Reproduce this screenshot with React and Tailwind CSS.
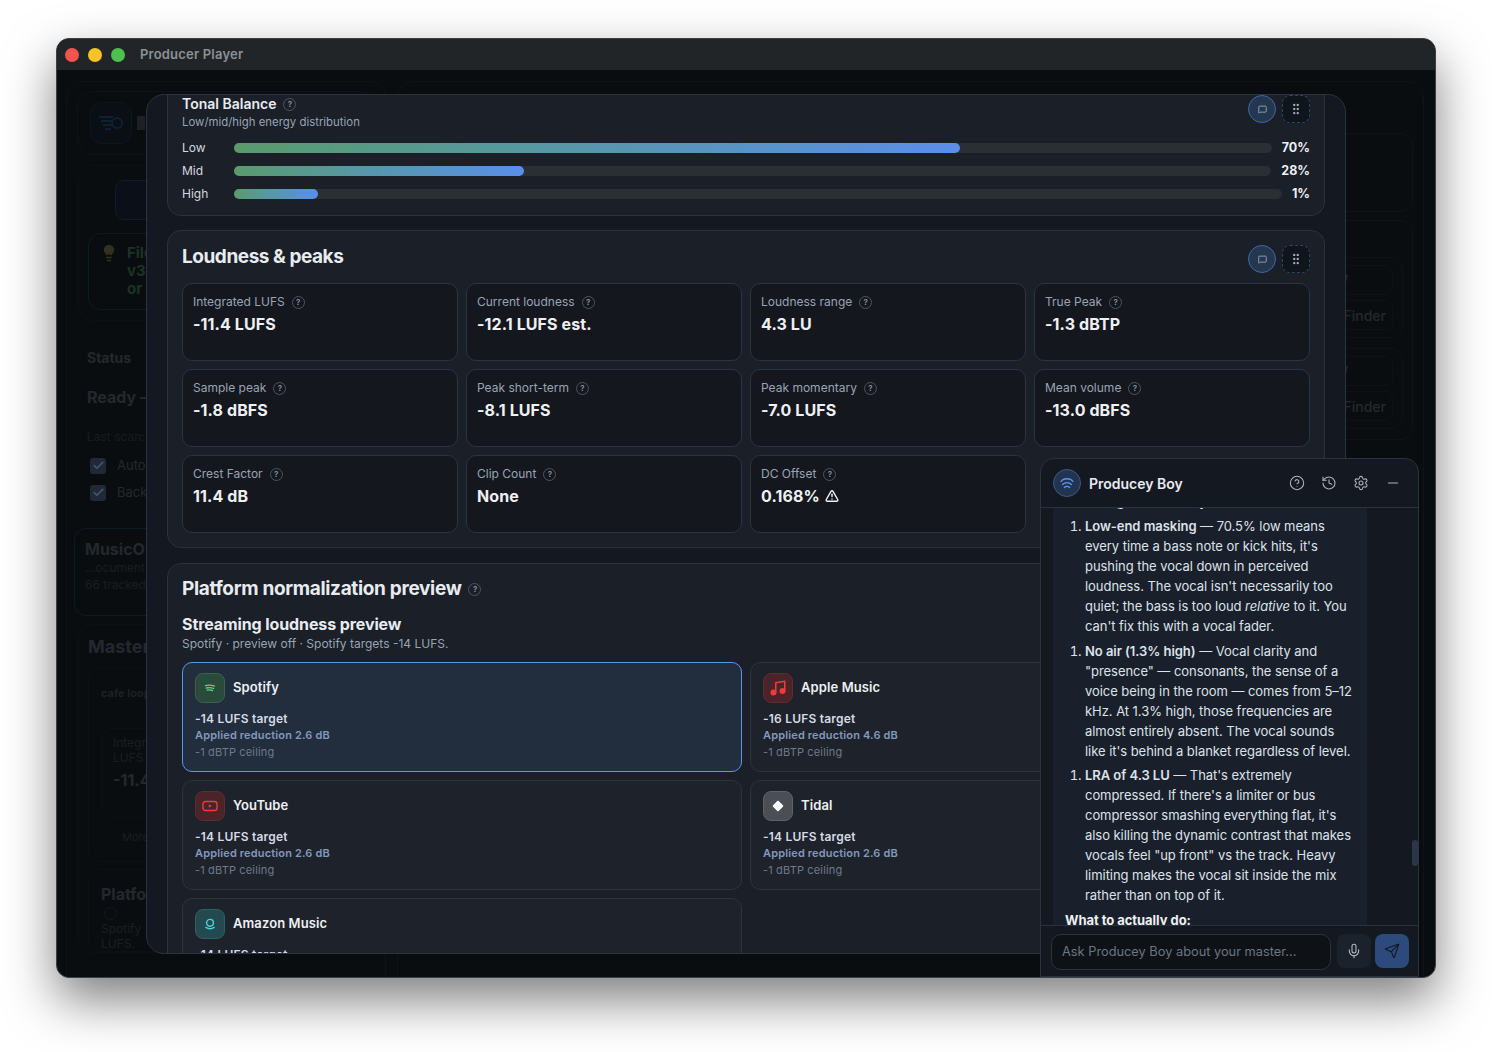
import { CircleHelp, History, Settings, Minus, Mic, Send, TriangleAlert, MessageSquare, GripVertical, Lightbulb, Check } from 'lucide-react';

const tonal = [
  { label: 'Low', value: '70%', fill: 'w-[70%]' },
  { label: 'Mid', value: '28%', fill: 'w-[28%]' },
  { label: 'High', value: '1%', fill: 'w-[8%]' },
];

const stats = [
  { label: 'Integrated LUFS', value: '-11.4 LUFS' },
  { label: 'Current loudness', value: '-12.1 LUFS est.' },
  { label: 'Loudness range', value: '4.3 LU' },
  { label: 'True Peak', value: '-1.3 dBTP' },
  { label: 'Sample peak', value: '-1.8 dBFS' },
  { label: 'Peak short-term', value: '-8.1 LUFS' },
  { label: 'Peak momentary', value: '-7.0 LUFS' },
  { label: 'Mean volume', value: '-13.0 dBFS' },
  { label: 'Crest Factor', value: '11.4 dB' },
  { label: 'Clip Count', value: 'None' },
  { label: 'DC Offset', value: '0.168%', warn: true },
];

function SpotifyIcon() {
  return (
    <svg width="14" height="14" viewBox="0 0 14 14" fill="none" stroke="#4ade80" strokeWidth="1.3" strokeLinecap="round">
      <path d="M2.5 4.6c3-.8 6-.6 9 .5" />
      <path d="M3.3 7c2.5-.6 5-.4 7.3.5" />
      <path d="M4.2 9.2c1.9-.4 3.7-.3 5.4.4" />
    </svg>
  );
}

function YoutubeIcon() {
  return (
    <svg width="16" height="12" viewBox="0 0 16 12" fill="none">
      <rect x="1" y="1.5" width="14" height="9" rx="2.6" stroke="#ef3b3b" strokeWidth="1.4" />
      <path d="M6.8 4.2 9.8 6l-3 1.8z" fill="#ef3b3b" />
    </svg>
  );
}

function AppleIcon() {
  return (
    <svg width="18" height="18" viewBox="0 0 24 24" fill="#ef3b3b" stroke="#ef3b3b" strokeWidth="2" strokeLinecap="round" strokeLinejoin="round">
      <path d="M9 18V5l12-2v13" fill="none" />
      <circle cx="6" cy="18" r="3" />
      <circle cx="18" cy="16" r="3" />
    </svg>
  );
}

function AmazonIcon() {
  return (
    <svg width="14" height="14" viewBox="0 0 14 14" fill="none" stroke="#4fd1d9" strokeWidth="1.4" strokeLinecap="round">
      <circle cx="7" cy="5.8" r="3.4" />
      <path d="M2.8 10.4c2.6 1.6 5.8 1.6 8.4 0" />
    </svg>
  );
}

const platforms = [
  {
    name: 'Spotify', target: '-14 LUFS target', reduction: 'Applied reduction 2.6 dB', active: true,
    tile: 'bg-[#2a4a3c] border-[#386349]', icon: <SpotifyIcon />,
  },
  {
    name: 'Apple Music', target: '-16 LUFS target', reduction: 'Applied reduction 4.6 dB',
    tile: 'bg-[#4a2429] border-[#5e2c32]', icon: <AppleIcon />,
  },
  {
    name: 'YouTube', target: '-14 LUFS target', reduction: 'Applied reduction 2.6 dB',
    tile: 'bg-[#4a2429] border-[#5e2c32]', icon: <YoutubeIcon />,
  },
  {
    name: 'Tidal', target: '-14 LUFS target', reduction: 'Applied reduction 2.6 dB',
    tile: 'bg-[#4b4e54] border-[#5f6268]', icon: <span className="block h-[8px] w-[8px] rotate-45 rounded-[1px] bg-white" />,
  },
  {
    name: 'Amazon Music', target: '-14 LUFS target', reduction: 'Applied reduction 2.6 dB',
    tile: 'bg-[#234a50] border-[#2e5f66]', icon: <AmazonIcon />,
  },
];

function Hint() {
  return (
    <span className="ml-[7px] flex h-[13px] w-[13px] shrink-0 items-center justify-center rounded-full border border-[#4b5563] text-[8px] font-semibold leading-none text-[#8b95a5]">
      ?
    </span>
  );
}

function CardActions() {
  return (
    <div className="flex gap-[6px]">
      <button className="flex h-[28px] w-[28px] items-center justify-center rounded-full border border-[#3b6ba8] bg-[#25364f]">
        <MessageSquare size={9} color="#aebccf" strokeWidth={2} />
      </button>
      <button className="flex h-[28px] w-[28px] items-center justify-center rounded-[8px] border border-dashed border-[#2f4568] bg-[#10141b]">
        <GripVertical size={14} color="#9fb0c8" strokeWidth={2} />
      </button>
    </div>
  );
}

function Backdrop() {
  return (
    <div className="flex h-[909px] gap-[11px] overflow-hidden pl-[9px] pr-[11px] pt-[11px] text-[#24282d]">
      <div className="w-[320px] shrink-0 rounded-t-2xl border border-[#0f1317] px-[10px] pt-[9px]">
        <div className="flex h-[64px] items-center rounded-2xl border border-[#0d131b] pl-[12px]">
          <div className="flex h-[42px] w-[42px] items-center justify-center rounded-xl border border-[#0f1620] bg-[#0a0f16]">
            <svg width="26" height="18" viewBox="0 0 26 18" fill="none" stroke="#121f33" strokeWidth="2">
              <path d="M1 3h14M3 7h11M5 11h9M7 15h6" />
              <circle cx="19" cy="9" r="5" />
            </svg>
          </div>
          <div className="ml-[5px] h-[14px] w-[8px] bg-[#1d2024]" />
        </div>
        <div className="mt-[10px] h-[156px] rounded-2xl border border-[#0d1115] pt-[14px]">
          <div className="ml-[37px] h-[40px] w-[220px] rounded-lg border border-[#111c2c] bg-[#0b1018]" />
          <div className="ml-[10px] mt-[13px] flex h-[77px] gap-[9px] rounded-xl border border-[#0f1c17] pl-[11px] pt-[10px]">
            <Lightbulb size={18} color="#33301f" fill="#33301f" />
            <p className="text-[15px] font-bold leading-[18px] text-[#1c3326]">Files<br />v3<br />or</p>
          </div>
        </div>
        <div className="mt-[16px] pl-[10px]">
          <p className="pt-[10px] text-[14px] font-bold text-[#24282d]">Status</p>
          <p className="mt-[17px] text-[16px] font-bold text-[#24282d]">Ready —</p>
          <p className="mt-[19px] text-[12px] text-[#171b20]">Last scan:</p>
          <div className="mt-[6px] flex h-[27px] items-center gap-[11px] pl-[3px] text-[13px]">
            <span className="flex h-[16px] w-[16px] items-center justify-center rounded-[3px] bg-[#1f2937]"><Check size={13} color="#50565e" strokeWidth={3} /></span>
            Auto
          </div>
          <div className="flex h-[27px] items-center gap-[11px] pl-[3px] text-[13px]">
            <span className="flex h-[16px] w-[16px] items-center justify-center rounded-[3px] bg-[#1f2937]"><Check size={13} color="#50565e" strokeWidth={3} /></span>
            Back
          </div>
        </div>
        <div className="-ml-[3px] mt-[22px] h-[88px] rounded-xl border border-[#0f1a29] pl-[10px] pt-[10px]">
          <p className="text-[16px] font-bold leading-[20px] text-[#24282d]">MusicOut</p>
          <p className="text-[12px] leading-[17px] text-[#191d22]">...ocuments</p>
          <p className="text-[12px] leading-[17px] text-[#191d22]">66 tracked</p>
        </div>
        <div className="mt-[8px] rounded-2xl border border-[#0d1115] pl-[10px] pt-[10px]">
          <p className="text-[18px] font-bold leading-[24px] text-[#24282d]">Mastering</p>
          <div className="mt-[8px] rounded-xl border border-[#0d1115] pl-[12px] pt-[17px]">
            <p className="text-[11px] font-bold text-[#1d2024]">cafe loop</p>
            <div className="mt-[26px] h-[90px] rounded-xl border border-[#0d1115] pl-[11px] pt-[6px] text-[12px] leading-[15px] text-[#1a1e22]">
              Integrated<br />LUFS
              <p className="mt-[8px] text-[16px] font-bold text-[#24282d]">-11.4</p>
            </div>
            <p className="pb-[16px] pl-[21px] pt-[11px] text-[11px] text-[#191d22]">More</p>
          </div>
          <div className="mt-[7px] rounded-xl border border-[#0d1115] pl-[12px] pt-[14px]">
            <p className="text-[16px] font-bold leading-[20px] text-[#24282d]">Platform</p>
            <span className="ml-[3px] mt-[3px] block h-[13px] w-[13px] rounded-full border border-[#15191e]" />
            <p className="mt-[1px] text-[12px] leading-[15px] text-[#1a1e22]">Spotify ·<br />LUFS.</p>
          </div>
        </div>
      </div>
      <div className="flex-1 rounded-t-2xl border border-[#0f1317] pl-[10px] pr-[10px] pt-[51px]">
        <div className="h-[79px] rounded-xl border border-[#0f1317]" />
        <div className="mt-[8px] rounded-xl border border-[#0f1317] pl-[10px] pr-[9px] pt-[36px]">
          {[0, 1].map((n) => (
            <div key={n} className="mb-[10px] rounded-xl border border-[#0e1216] px-[9px] pb-[7px] pt-[7px]">
              <div className="flex h-[30px] items-center justify-end rounded-lg border border-[#0e1216] pr-[44px] text-[14px] font-medium text-[#24282d]">Open in DAW</div>
              <div className="mt-[5px] flex h-[30px] items-center justify-end rounded-lg border border-[#0e1216] pr-[6px] text-[14px] font-medium text-[#24282d]">Reveal in Finder</div>
            </div>
          ))}
        </div>
      </div>
    </div>
  );
}

function AnalysisModal() {
  return (
    <div className="absolute left-[89px] top-[55px] h-[860px] w-[1200px] overflow-hidden rounded-[18px] border border-[#2a3342] bg-[#141820] px-[20px] text-[#e8ebf0]">
      <section className="-mt-[14px] h-[135px] rounded-[14px] border border-[#2a3240] bg-[#1a1f28] px-[14px] pt-[13px]">
        <div className="flex justify-between">
          <div>
            <h3 className="flex items-center text-[14px] font-semibold leading-[18px]">Tonal Balance<Hint /></h3>
            <p className="mt-[1px] text-[11.4px] leading-[16px] text-[#98a4b5]">Low/mid/high energy distribution</p>
          </div>
          <CardActions />
        </div>
        <div className="mt-[13px] flex flex-col gap-[13px]">
          {tonal.map((row) => (
            <div key={row.label} className="flex h-[10px] items-center gap-[10px]">
              <span className="w-[42px] shrink-0 text-[12px] text-[#d5d9df]">{row.label}</span>
              <div className="h-[10px] flex-1 rounded-full bg-[#2a2f33]">
                <div className={`h-full rounded-full bg-gradient-to-r from-[#5a9a6c] to-[#5a8eea] ${row.fill}`} />
              </div>
              <span className="text-[12.5px] font-bold text-[#eef0f3]">{row.value}</span>
            </div>
          ))}
        </div>
      </section>

      <section className="mt-[14px] h-[318px] rounded-[14px] border border-[#2a3240] bg-[#1a1f28] px-[14px] pt-[14px]">
        <div className="flex justify-between">
          <h2 className="text-[19px] font-bold leading-[24px] tracking-[-0.45px]">Loudness &amp; peaks</h2>
          <CardActions />
        </div>
        <div className="mt-[10px] grid grid-cols-4 gap-[8px]">
          {stats.map((stat) => (
            <div key={stat.label} className="h-[78px] rounded-[10px] border border-[#2b3442] bg-[#14171d] px-[10px] pt-[10px]">
              <p className="flex items-center text-[12px] leading-[16px] text-[#98a4b5]">{stat.label}<Hint /></p>
              <p className="mt-[3px] flex items-center gap-[5px] text-[16px] font-bold leading-[22px] tracking-[0.1px] text-[#eef0f3]">
                {stat.value}
                {stat.warn && <TriangleAlert size={14} strokeWidth={2.5} />}
              </p>
            </div>
          ))}
        </div>
      </section>

      <section className="mt-[15px] rounded-[14px] border border-[#2a3240] bg-[#1a1f28] px-[14px] pt-[13px]">
        <h2 className="flex items-center text-[19px] font-bold leading-[24px] tracking-[-0.33px]">Platform normalization preview<Hint /></h2>
        <h3 className="mt-[13px] text-[16px] font-bold leading-[20px] tracking-[-0.1px]">Streaming loudness preview</h3>
        <p className="mt-[2px] text-[12px] leading-[16px] text-[#98a4b5]">Spotify · preview off · Spotify targets -14 LUFS.</p>
        <div className="mt-[10px] grid grid-cols-2 gap-[8px]">
          {platforms.map((p) => (
            <div
              key={p.name}
              className={`h-[110px] rounded-[10px] border px-[12px] pt-[10px] ${p.active ? 'border-[#5a96f0] bg-[#222d3e]' : 'border-[#2b3440] bg-[#1e222b]'}`}
            >
              <div className="flex items-center gap-[8px]">
                <span className={`flex h-[30px] w-[30px] items-center justify-center rounded-[8px] border ${p.tile}`}>{p.icon}</span>
                <span className="text-[13px] font-semibold tracking-[0.1px] text-[#eef0f3]">{p.name}</span>
              </div>
              <p className="mt-[7px] text-[12px] font-semibold leading-[17px] tracking-[0.2px] text-[#d5dbe5]">{p.target}</p>
              <p className="text-[11px] font-semibold leading-[16px] tracking-[0.15px] text-[#8399ba]">{p.reduction}</p>
              <p className="mt-[1px] text-[11px] leading-[17px] tracking-[0.15px] text-[#6f7a88]">-1 dBTP ceiling</p>
            </div>
          ))}
        </div>
      </section>
    </div>
  );
}

function ChatPanel() {
  return (
    <div className="absolute bottom-0 right-[16px] flex h-[519px] w-[379px] flex-col overflow-hidden rounded-t-[14px] border border-[#2a3240] bg-[#141820] text-[#e8ebf0]">
      <header className="flex h-[49px] shrink-0 items-center border-b border-[#2a3240] pl-[12px] pr-[17px]">
        <span className="flex h-[28px] w-[28px] items-center justify-center rounded-full border border-[#3a5a88] bg-[#22344f]">
          <svg width="16" height="14" viewBox="0 0 16 14" fill="none" stroke="#5b94ee" strokeWidth="1.3" strokeLinecap="round">
            <path d="M2 5.5C4.5 1.8 11.5 1.8 14 5.5" />
            <path d="M3.6 8.5c2.2-2.6 6.6-2.6 8.8 0" />
            <path d="M5.4 11.5c1.4-1.5 3.8-1.5 5.2 0" />
          </svg>
        </span>
        <span className="ml-[8px] flex-1 text-[14px] font-semibold">Producey Boy</span>
        <div className="flex items-center gap-[16px] text-[#aab4c2]">
          <CircleHelp size={16} strokeWidth={1.6} />
          <History size={16} strokeWidth={1.6} />
          <Settings size={16} strokeWidth={1.6} />
          <Minus size={16} strokeWidth={1.6} />
        </div>
      </header>

      <div className="min-h-0 flex-1 overflow-hidden pl-[12px]">
        <div className="-mt-[17px] w-[314px] bg-[#1a202b] px-[12px] text-[13px] leading-[20px] tracking-[-0.05px] text-[#dde2ea]">
          <p className="font-semibold">Three big reasons why:</p>
          <ol className="mt-[5px] list-decimal pl-[20px]">
            <li>
              <strong className="font-semibold">Low-end masking</strong> — 70.5% low means every time a bass note or kick hits, it's pushing the vocal down in perceived loudness. The vocal isn't necessarily too quiet; the bass is too loud <em>relative</em> to it. You can't fix this with a vocal fader.
            </li>
          </ol>
          <ol className="mt-[5px] list-decimal pl-[20px]">
            <li>
              <strong className="font-semibold">No air (1.3% high)</strong> — Vocal clarity and "presence" — consonants, the sense of a voice being in the room — comes from 5–12 kHz. At 1.3% high, those frequencies are almost entirely absent. The vocal sounds like it's behind a blanket regardless of level.
            </li>
          </ol>
          <ol className="mt-[4px] list-decimal pl-[20px]">
            <li>
              <strong className="font-semibold">LRA of 4.3 LU</strong> — That's extremely compressed. If there's a limiter or bus compressor smashing everything flat, it's also killing the dynamic contrast that makes vocals feel "up front" vs the track. Heavy limiting makes the vocal sit inside the mix rather than on top of it.
            </li>
          </ol>
          <p className="mt-[5px] font-bold text-[#eef0f3]">What to actually do:</p>
        </div>
      </div>

      <span className="absolute right-[0px] top-[381px] h-[26px] w-[6px] rounded-full bg-[#2c3644]" />

      <footer className="flex h-[51px] shrink-0 items-start gap-[6px] border-t border-[#2a3240] pl-[10px] pt-[8px]">
        <div className="flex h-[36px] w-[280px] items-center rounded-[10px] border border-[#2a3240] bg-[#0e1216] px-[10px] text-[12.8px] text-[#6b7583]">
          Ask Producey Boy about your master...
        </div>
        <button className="flex h-[34px] w-[34px] items-center justify-center rounded-[8px] bg-[#1c222c] text-[#b4bcc8]">
          <Mic size={16} strokeWidth={1.6} />
        </button>
        <button className="-ml-[2px] flex h-[34px] w-[34px] items-center justify-center rounded-[8px] bg-[#2c4a7c] text-[#11161f]">
          <Send size={16} strokeWidth={1.6} />
        </button>
      </footer>
    </div>
  );
}

export default function App() {
  return (
    <div className="h-[1052px] w-full overflow-hidden bg-white pl-[56px] pt-[38px] font-['Inter',sans-serif]">
      <div className="relative h-[940px] w-[1380px] overflow-hidden rounded-[13px] border border-[#3c4043] bg-[#0a0d10] shadow-[0_22px_50px_rgba(0,0,0,0.5)]">
        <div className="flex h-[31px] items-center bg-[#212527] pl-[8px]">
          <span className="h-[14px] w-[14px] rounded-full bg-[#f4544e]" />
          <span className="ml-[9px] h-[14px] w-[14px] rounded-full bg-[#f7c325]" />
          <span className="ml-[9px] h-[14px] w-[14px] rounded-full bg-[#4cc14e]" />
          <span className="ml-[15px] text-[13px] font-semibold tracking-[0.2px] text-[#8c9196]">Producer Player</span>
        </div>
        <Backdrop />
        <AnalysisModal />
        <ChatPanel />
      </div>
    </div>
  );
}
